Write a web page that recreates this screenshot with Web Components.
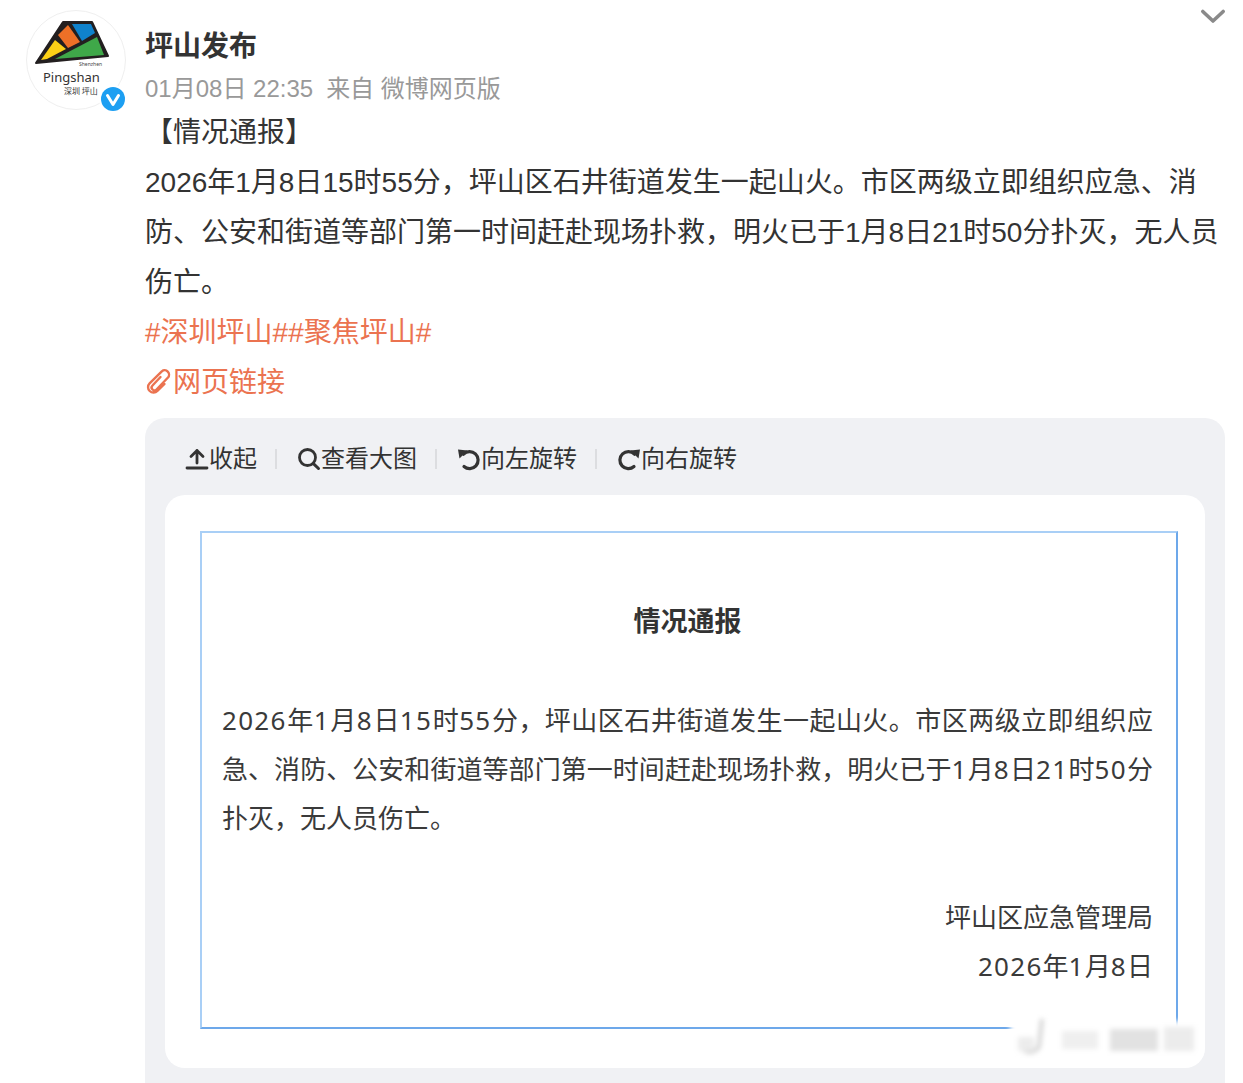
<!DOCTYPE html>
<html lang="zh-CN"><head><meta charset="utf-8"><title>坪山发布</title>
<style>
html,body{margin:0;padding:0;height:1083px;overflow:hidden;background:#fff}
body{font-family:"Liberation Sans","Noto Sans CJK SC",sans-serif;color:#333}
</style></head><body>
<wb-post>
  <wb-avatar slot="avatar"></wb-avatar>
  <wb-head slot="head" name="坪山发布"><span>01月08日 22:35</span><span>来自 微博网页版</span></wb-head>
  <wb-body slot="body"></wb-body>
  <wb-media slot="media">
    <wb-tool icon="up">收起</wb-tool>
    <wb-tool icon="search">查看大图</wb-tool>
    <wb-tool icon="left">向左旋转</wb-tool>
    <wb-tool icon="right">向右旋转</wb-tool>
    <wb-notice slot="picture"></wb-notice>
  </wb-media>
</wb-post>
<script>
const def=(name,html)=>{customElements.define(name,class extends HTMLElement{
  constructor(){super();this.attachShadow({mode:'open'});if(typeof html!=='function')this.shadowRoot.innerHTML=html;}
  connectedCallback(){if(typeof html==='function'){this.shadowRoot.innerHTML=html(this);}}
});};

def('wb-post',`<style>
:host{display:block;width:1243px;height:1083px;overflow:hidden;box-sizing:border-box;position:relative}
.top{display:flex;padding:10px 18px 0 26px}
.av{flex:0 0 119px}
.main{flex:1;min-width:0}
.chev{position:absolute;right:17px;top:8px;width:26px;height:16px}
.rest{padding-left:145px;padding-right:18px}
</style>
<svg class="chev" viewBox="0 0 26 16"><path d="M2.8 3.5 13 13 23.2 3.5" fill="none" stroke="#8a8a8a" stroke-width="3.6" stroke-linecap="round" stroke-linejoin="round"/></svg>
<div class="top"><div class="av"><slot name="avatar"></slot></div><div class="main"><slot name="head"></slot></div></div>
<div class="rest"><slot name="body"></slot><slot name="media"></slot></div>`);

def('wb-avatar',`<style>
:host{display:block;width:100px;height:100px;position:relative}
.c{width:100px;height:100px;box-sizing:border-box;border:1.5px solid #efefef;border-radius:50%;background:#fff;overflow:hidden}
svg.logo{display:block;width:100px;height:100px;margin:-1.5px}
.v{position:absolute;left:73px;top:75px;width:28px;height:28px}
</style>
<div class="c"><svg class="logo" viewBox="26 10 100 100">
<path d="M36 63 63 22H92L108 56Z" fill="#231f20" stroke="#231f20" stroke-width="2" stroke-linejoin="round"/>
<path d="M41 60 55 40 66 49 47 59Z" fill="#fdd116"/>
<path d="M58 35 68 25 80 42 68 48Z" fill="#ee7027"/>
<path d="M72 24H91L95 33 82 41Z" fill="#0f82cc"/>
<path d="M55 59 97 37 104 55Z" fill="#3fa849"/>
<text x="79" y="66" font-family="Noto Sans" font-size="5" fill="#444">Shenzhen</text>
<text x="43" y="81.5" font-family="Noto Sans" font-size="13" fill="#333">Pingshan</text>
<text x="64" y="94" font-family="Noto Sans CJK SC" font-size="8" fill="#333">深圳 坪山</text>
</svg></div>
<svg class="v" viewBox="0 0 28 28"><circle cx="14" cy="14" r="14" fill="#fff"/><circle cx="14" cy="14" r="12" fill="#1d9ff2"/><path d="M8.5 10.5 14 19.5 19.5 10.5" fill="none" stroke="#fff" stroke-width="3" stroke-linecap="round" stroke-linejoin="round"/></svg>`);

def('wb-head',h=>`<style>
:host{display:block;padding-top:12px}
.n{font-size:28px;font-weight:700;line-height:50px;color:#333}
.m{font-size:24px;line-height:34px;color:#999;display:flex;gap:13px}
</style><div class="n">${h.getAttribute('name')||''}</div><div class="m"><slot></slot></div>`);

def('wb-body',`<style>
:host{display:block;font-size:28px;line-height:50px;color:#333;margin-top:-2px}
.l{color:#eb7350;display:block}
.l svg{width:28px;height:28px;vertical-align:-4px}
</style>
<div>【情况通报】</div>
<div>2026年1月8日15时55分，坪山区石井街道发生一起山火。市区两级立即组织应急、消防、公安和街道等部门第一时间赶赴现场扑救，明火已于1月8日21时50分扑灭，无人员伤亡。</div>
<div class="l">#深圳坪山##聚焦坪山#</div>
<div class="l"><svg viewBox="0 0 28 28"><path d="M15.5 9 7.5 17.5a2.8 2.8 0 0 0 4 4L23 9.5a4.4 4.4 0 0 0-6.2-6.2L4.6 15.3a5.4 5.4 0 0 0 7.8 7.6L19.5 16" fill="none" stroke="#eb7350" stroke-width="2.4" stroke-linecap="round" stroke-linejoin="round"/></svg>网页链接</div>`);

def('wb-media',`<style>
:host{display:block;margin-top:10px;background:#f0f1f4;border-radius:20px 20px 0 0;padding:0 20px 15px;height:665px;box-sizing:border-box}
.bar{display:flex;align-items:center;height:77px;padding:4px 0 0 20px;box-sizing:border-box}
::slotted(wb-tool:first-child){padding-left:0}
</style><div class="bar"><slot></slot></div><slot name="picture"></slot>`);

const icons={
 up:`<path d="M12 3.5V16M6 9.5 12 3.5 18 9.5M2 21H22" fill="none" stroke="#333" stroke-width="2.8" stroke-linecap="round" stroke-linejoin="round"/>`,
 search:`<circle cx="10.5" cy="10.5" r="8" fill="none" stroke="#333" stroke-width="2.8"/><path d="M16.4 16.6 21.5 21.5" fill="none" stroke="#333" stroke-width="3" stroke-linecap="round"/>`,
 left:`<path d="M6.5 7.2A8.5 8.5 0 1 1 7 19.5" fill="none" stroke="#333" stroke-width="3.2" stroke-linecap="round"/><path d="M1 2.5 10.5 3.5 2.5 11.5Z" fill="#333"/>`,
 right:`<path d="M17.5 7.2A8.5 8.5 0 1 0 17 19.5" fill="none" stroke="#333" stroke-width="3.2" stroke-linecap="round"/><path d="M23 2.5 13.5 3.5 21.5 11.5Z" fill="#333"/>`
};
def('wb-tool',h=>`<style>
:host{display:inline-flex;align-items:center;font-size:24px;line-height:30px;color:#333;padding:0 20px;position:relative}
svg{width:24px;height:24px;flex:none}
.d{position:absolute;right:0;top:5px;width:2px;height:20px;background:#dcdde0}
</style><svg viewBox="0 0 24 24">${icons[h.getAttribute('icon')]||''}</svg><slot></slot>${h.getAttribute('icon')==='right'?'':'<i class="d"></i>'}`);

const D=s=>`<span class="n">${s}</span>`;
def('wb-notice',`<style>
:host{display:block;background:#fff;border-radius:20px;padding:36px 27px 39px 35px;height:573px;box-sizing:border-box;position:relative;overflow:hidden}
.doc{height:498px;box-sizing:border-box;border:2px solid #6da8ea;border-left-color:#a9cff6;border-top-color:#a9cff6;padding:0 23px 0 20px;font-family:"Noto Sans","Noto Sans CJK SC",sans-serif;font-size:26px;line-height:49px;color:#3a3a3a}
.n{letter-spacing:1.3px}
.t{font-family:"Noto Sans CJK SC",sans-serif;font-size:27px;font-weight:700;text-align:center;line-height:40px;padding-top:67px;margin-bottom:56px;color:#333}
.j{text-align:justify;text-align-last:justify}
.r{text-align:right}
.sign{margin-top:50px}
.wm{position:absolute;left:845px;top:522px;width:195px;height:46px;filter:blur(2.5px)}
</style>
<div class="doc">
<div class="t">情况通报</div>
<div class="j">${D('2026')}年${D('1')}月${D('8')}日${D('15')}时${D('55')}分，坪山区石井街道发生一起山火。市区两级立即组织应</div>
<div class="j">急、消防、公安和街道等部门第一时间赶赴现场扑救，明火已于${D('1')}月${D('8')}日${D('21')}时${D('50')}分</div>
<div>扑灭，无人员伤亡。</div>
<div class="sign r">坪山区应急管理局</div>
<div class="r">${D('2026')}年${D('1')}月${D('8')}日</div>
</div>
<svg class="wm" viewBox="0 0 195 46" aria-hidden="true">
<rect x="0" y="4" width="195" height="38" fill="#fff"/>
<path d="M32 2 29 30Q22 38 14 33" fill="none" stroke="#d4d4d4" stroke-width="4"/>
<path d="M8 20H24V34H8Z" fill="#ececec"/>
<rect x="52" y="14" width="36" height="18" fill="#efefef"/>
<rect x="100" y="12" width="48" height="22" fill="#e2e2e2"/>
<rect x="154" y="10" width="30" height="24" fill="#ececec"/>
</svg>`);
</script>
</body></html>
